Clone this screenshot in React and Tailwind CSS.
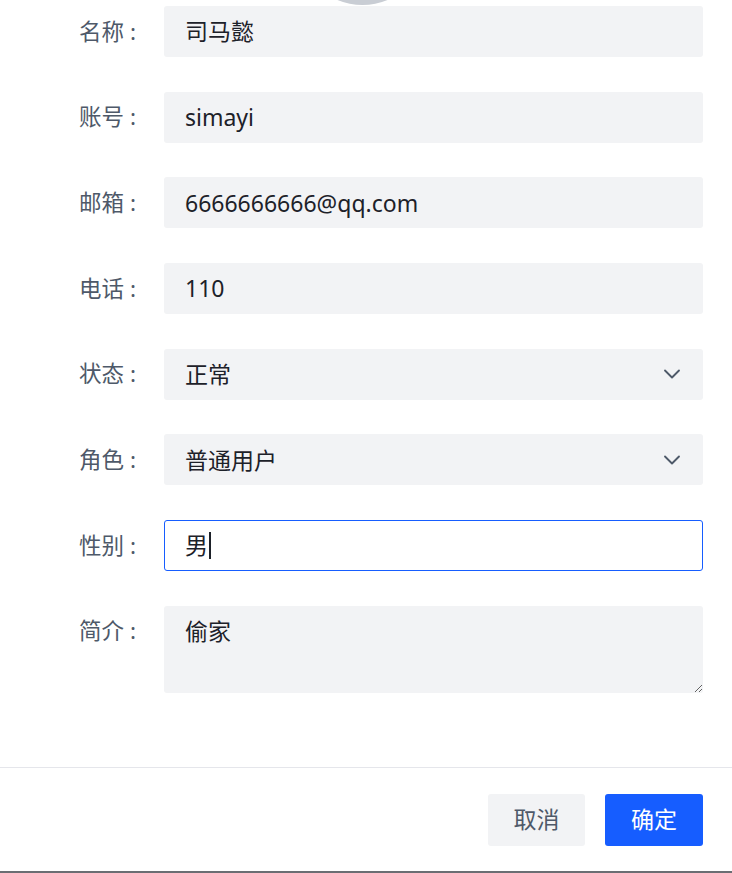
import { ChevronDown } from "lucide-react";

const fields = [
  { label: "名称", value: "司马懿" },
  { label: "账号", value: "simayi" },
  { label: "邮箱", value: "6666666666@qq.com" },
  { label: "电话", value: "110" },
  { label: "状态", value: "正常", select: true },
  { label: "角色", value: "普通用户", select: true },
  { label: "性别", value: "男", focused: true },
];

function Label({ text }) {
  return (
    <div className="flex h-[51px] w-[164px] shrink-0 items-center justify-end pr-[28px] text-[22.5px] text-[#4e5969]">
      <span>{text}</span>
      <span className="ml-[6px]">:</span>
    </div>
  );
}

export default function App() {
  return (
    <main
      className="flex h-[873px] w-[732px] flex-col overflow-hidden bg-white"
      style={{ fontFamily: '"Noto Sans", "Noto Sans CJK SC", sans-serif' }}
    >
      {/* avatar peeking from above */}
      <div className="relative h-[6px] shrink-0 overflow-hidden">
        <div className="absolute left-[297px] top-[-126px] h-[131px] w-[131px] rounded-full bg-[#c9cdd4]" />
      </div>

      <div className="flex flex-1 flex-col gap-[34.7px] pr-[29px]">
        {fields.map((f) => (
          <div key={f.label} className="flex">
            <Label text={f.label} />
            {f.focused ? (
              <div className="flex h-[51px] flex-1 items-center rounded-[3px] border border-[#165dff] bg-white pl-[20px] text-[23px] text-[#1d2129]">
                <span>{f.value}</span>
                <span className="ml-[1px] h-[27px] w-[1.5px] bg-[#1d2129]" />
              </div>
            ) : (
              <div className="flex h-[51px] flex-1 items-center justify-between rounded-[3px] bg-[#f2f3f5] pl-[21px] pr-[17px] text-[23px] text-[#1d2129]">
                <span>{f.value}</span>
                {f.select && <ChevronDown size={28} strokeWidth={1.6} className="text-[#4e5969]" />}
              </div>
            )}
          </div>
        ))}

        <div className="flex">
          <Label text="简介" />
          <textarea
            defaultValue="偷家"
            className="h-[87px] flex-1 rounded-[3px] bg-[#f2f3f5] px-[21px] py-[9px] text-[23px] leading-[32px] text-[#1d2129] outline-none"
          />
        </div>
      </div>

      <div className="flex h-[106px] shrink-0 items-center justify-end gap-[20px] border-t border-b-2 border-t-[#e5e6eb] border-b-[#6b6e73] pr-[29px]">
        <button className="h-[52px] w-[97px] rounded-[3px] bg-[#f2f3f5] text-[23px] text-[#4e5969]">取消</button>
        <button className="h-[52px] w-[98px] rounded-[3px] bg-[#165dff] text-[23px] text-white">确定</button>
      </div>
    </main>
  );
}
